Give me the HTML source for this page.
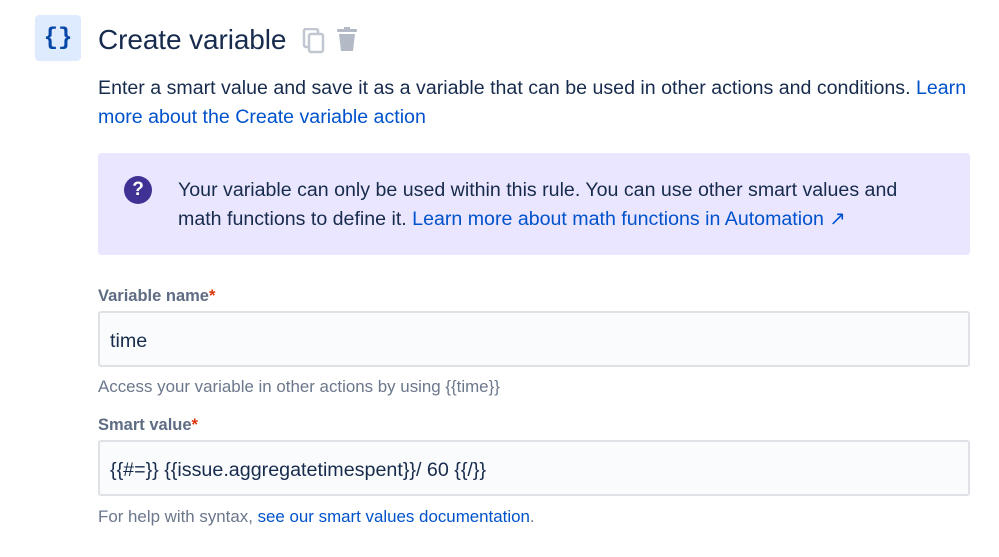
<!DOCTYPE html>
<html><head><style>
body{margin:0;width:999px;height:557px;background:#fff;font-family:"Liberation Sans",sans-serif;color:#172b4d;position:relative;overflow:hidden}
.a{position:absolute;white-space:nowrap}
.ic{left:35px;top:15px;width:46px;height:46px;background:#deebff;border-radius:4px;color:#0747a6;font-weight:bold;font-size:24px;text-align:center;line-height:48px;font-family:"Liberation Mono",monospace}
h1{position:absolute;left:98px;top:24px;margin:0;font-size:28px;font-weight:normal;color:#172b4d;letter-spacing:-0.1px}
a{color:#0052cc;text-decoration:none}
.d{left:98px;font-size:19.6px;line-height:29px}
.info{position:absolute;left:98px;top:153px;width:872px;height:102px;background:#eae6ff;border-radius:3px}
.q{position:absolute;left:124px;top:176px;width:28px;height:28px;border-radius:50%;background:#403294;color:#fff;font-weight:bold;font-size:19px;text-align:center;line-height:28px}
.lab{left:98px;font-size:16.5px;font-weight:bold;color:#5e6c84}
.lab span{color:#de350b}
.inp{position:absolute;left:98px;height:52px;background:#fafbfc;border:2px solid #dfe1e6;border-radius:3px;font-size:19.7px;line-height:56px;padding-left:10px;box-sizing:content-box;width:858px}
.h{left:98px;font-size:16.9px;color:#6b778c}
</style></head><body>
<div class="a ic">{}</div>
<h1>Create variable</h1>
<svg class="a" style="left:302px;top:28px" width="24" height="26" viewBox="0 0 24 26"><rect x="2" y="1" width="14" height="18" rx="2" fill="none" stroke="#c1c7d0" stroke-width="2.5"/><rect x="7" y="6" width="14" height="18" rx="2" fill="#fff" stroke="#c1c7d0" stroke-width="2.5"/></svg>
<svg class="a" style="left:335px;top:27px" width="24" height="26" viewBox="0 0 24 26"><rect x="2" y="2" width="20" height="3" rx="1" fill="#b3bac5"/><rect x="9" y="0" width="6" height="3" fill="#b3bac5"/><path d="M4 7h16l-2 17H6z" fill="#b3bac5"/></svg>
<div class="a d" style="top:74px">Enter a smart value and save it as a variable that can be used in other actions and conditions. <a>Learn</a></div>
<div class="a d" style="top:103px"><a>more about the Create variable action</a></div>
<div class="info"></div>
<div class="q">?</div>
<div class="a d" style="left:178px;top:176px">Your variable can only be used within this rule. You can use other smart values and</div>
<div class="a d" style="left:178px;top:205px">math functions to define it. <a>Learn more about math functions in Automation ↗</a></div>
<div class="a lab" style="top:287px">Variable name<span>*</span></div>
<div class="inp" style="top:311px">time</div>
<div class="a h" style="top:377px">Access your variable in other actions by using {{time}}</div>
<div class="a lab" style="top:416px">Smart value<span>*</span></div>
<div class="inp" style="top:440px">{{#=}} {{issue.aggregatetimespent}}/ 60 {{/}}</div>
<div class="a h" style="top:507px">For help with syntax, <a>see our smart values documentation</a>.</div>
</body></html>
